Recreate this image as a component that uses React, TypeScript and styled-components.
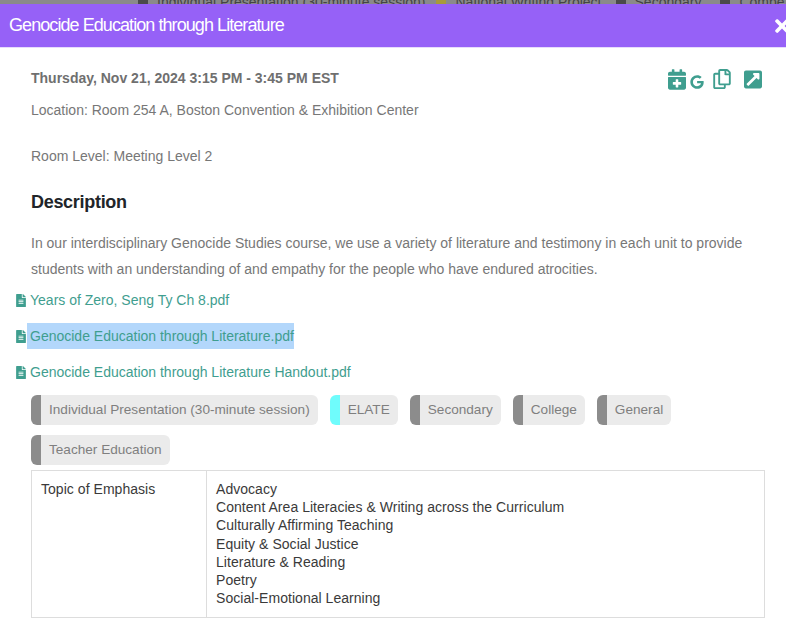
import React from 'react';
import styled, { createGlobalStyle } from 'styled-components';
import { FaCalendarPlus, FaExternalLinkSquareAlt, FaFileAlt, FaGoogle, FaRegCopy, FaTimes } from 'react-icons/fa';

const GlobalStyle = createGlobalStyle`
  html, body {
    margin: 0;
    background: #fff;
    overflow: hidden;
  }
  body {
    font-family: "Liberation Sans", Arial, sans-serif;
  }
`;

const Page = styled.div`
  width: 786px;
  height: 623px;
  overflow: hidden;
`;

const BackStrip = styled.div`
  display: flex;
  height: 4px;
  overflow: hidden;
  background: #8a8a8a;
  color: #444;
  font-size: 14px;
  line-height: 4px;
  white-space: nowrap;
`;

const BackBlock = styled.span<{ $color: string; $left: number }>`
  flex: none;
  width: 10px;
  margin-left: ${(p) => p.$left}px;
  margin-right: 9px;
  background: ${(p) => p.$color};
`;

const Header = styled.header`
  display: flex;
  align-items: center;
  justify-content: space-between;
  height: 43px;
  padding-left: 9px;
  background: #9661f7;
  color: #fff;
  font-size: 18px;
  letter-spacing: -0.93px;
  overflow: hidden;
  border-bottom: 1px solid #e6dcfb;
`;

const CloseIcon = styled(FaTimes)`
  flex: none;
  width: 20px;
  height: 20px;
  margin-right: -6px;
`;

const Body = styled.main`
  padding: 21px 21px 0 31px;
  color: #777;
  font-size: 14px;
`;

const TopRow = styled.div`
  display: flex;
  justify-content: space-between;
`;

const When = styled.div`
  font-weight: 700;
  line-height: 18px;
  color: #6f6f6f;
`;

const Actions = styled.div`
  display: flex;
  align-items: flex-start;
  height: 18px;
  color: #3f9e8f;
  margin-right: 3px;
`;

const CalIcon = styled(FaCalendarPlus)`
  width: 18px;
  height: 21px;
`;

const GoogleIcon = styled(FaGoogle)`
  width: 14px;
  height: 14px;
  margin: 6px 0 0 4px;
`;

const CopyIcon = styled(FaRegCopy)`
  width: 18px;
  height: 20px;
  margin-left: 9px;
`;

const LinkIcon = styled(FaExternalLinkSquareAlt)`
  width: 18px;
  height: 21px;
  margin-left: 13px;
`;

const Info = styled.p<{ $top: number }>`
  margin: ${(p) => p.$top}px 0 0;
  line-height: 18px;
`;

const Heading = styled.h2`
  margin: 26px 0 0;
  font-size: 18px;
  line-height: 22px;
  font-weight: 700;
  letter-spacing: -0.3px;
  color: #212529;
`;

const Text = styled.p`
  margin: 17px 0 0;
  line-height: 26px;
  max-width: 725px;
`;

const Files = styled.div`
  display: flex;
  flex-direction: column;
  gap: 18px;
  margin: 9px 0 0 -15px;
`;

const FileRow = styled.a`
  display: flex;
  align-items: center;
  height: 18px;
  color: #3f9e8f;
  line-height: 18px;
`;

const FileIcon = styled(FaFileAlt)`
  flex: none;
  width: 10px;
  height: 13px;
  margin-right: 1px;
`;

const FileName = styled.span<{ $selected?: boolean }>`
  padding: 4px 0 4px 3px;
  background: ${(p) => (p.$selected ? '#b3d7fb' : 'transparent')};
`;

const Chips = styled.div`
  display: flex;
  flex-wrap: wrap;
  gap: 10px 12px;
  margin-top: 14px;
`;

const Chip = styled.span<{ $bar: string }>`
  display: block;
  height: 30px;
  box-sizing: border-box;
  padding: 0 8px;
  border-left: 10px solid ${(p) => p.$bar};
  border-radius: 6px;
  background: #ebebeb;
  font-size: 13.6px;
  line-height: 29px;
  color: #7f7f7f;
`;

const Details = styled.table`
  width: 734px;
  margin-top: 5px;
  border-collapse: collapse;
  color: #3a3a3a;
  font-size: 14px;
  letter-spacing: 0.04px;
`;

const Cell = styled.td<{ $w?: number }>`
  box-sizing: border-box;
  width: ${(p) => (p.$w ? `${p.$w}px` : 'auto')};
  padding: 9px 9px 10px;
  border: 1px solid #ddd;
  vertical-align: top;
  line-height: 18.2px;
`;

const chips = [
  { label: 'Individual Presentation (30-minute session)', bar: '#8c8c8c' },
  { label: 'ELATE', bar: '#6ffcfc' },
  { label: 'Secondary', bar: '#8c8c8c' },
  { label: 'College', bar: '#8c8c8c' },
  { label: 'General', bar: '#8c8c8c' },
  { label: 'Teacher Education', bar: '#8c8c8c' },
];

const files = [
  { name: 'Years of Zero, Seng Ty Ch 8.pdf' },
  { name: 'Genocide Education through Literature.pdf', selected: true },
  { name: 'Genocide Education through Literature Handout.pdf' },
];

const topics = [
  'Advocacy',
  'Content Area Literacies & Writing across the Curriculum',
  'Culturally Affirming Teaching',
  'Equity & Social Justice',
  'Literature & Reading',
  'Poetry',
  'Social-Emotional Learning',
];

export default function App() {
  return (
    <Page>
      <GlobalStyle />
      <BackStrip>
        <BackBlock $color="#4a4a4a" $left={138} />
        Individual Presentation (30-minute session)
        <BackBlock $color="#a89a3a" $left={11} />
        National Writing Project
        <BackBlock $color="#4a4a4a" $left={14} />
        Secondary
        <BackBlock $color="#4a4a4a" $left={19} />
        Compe
      </BackStrip>
      <Header>
        Genocide Education through Literature
        <CloseIcon />
      </Header>
      <Body>
        <TopRow>
          <When>Thursday, Nov 21, 2024 3:15 PM - 3:45 PM EST</When>
          <Actions>
            <CalIcon />
            <GoogleIcon />
            <CopyIcon />
            <LinkIcon />
          </Actions>
        </TopRow>
        <Info $top={14}>Location: Room 254 A, Boston Convention &amp; Exhibition Center</Info>
        <Info $top={28}>Room Level: Meeting Level 2</Info>
        <Heading>Description</Heading>
        <Text>
          In our interdisciplinary Genocide Studies course, we use a variety of literature and testimony in each unit
          to provide students with an understanding of and empathy for the people who have endured atrocities.
        </Text>
        <Files>
          {files.map((f) => (
            <FileRow key={f.name}>
              <FileIcon />
              <FileName $selected={f.selected}>{f.name}</FileName>
            </FileRow>
          ))}
        </Files>
        <Chips>
          {chips.map((c) => (
            <Chip key={c.label} $bar={c.bar}>
              {c.label}
            </Chip>
          ))}
        </Chips>
        <Details>
          <tbody>
            <tr>
              <Cell $w={175}>Topic of Emphasis</Cell>
              <Cell>
                {topics.map((t) => (
                  <div key={t}>{t}</div>
                ))}
              </Cell>
            </tr>
          </tbody>
        </Details>
      </Body>
    </Page>
  );
}
